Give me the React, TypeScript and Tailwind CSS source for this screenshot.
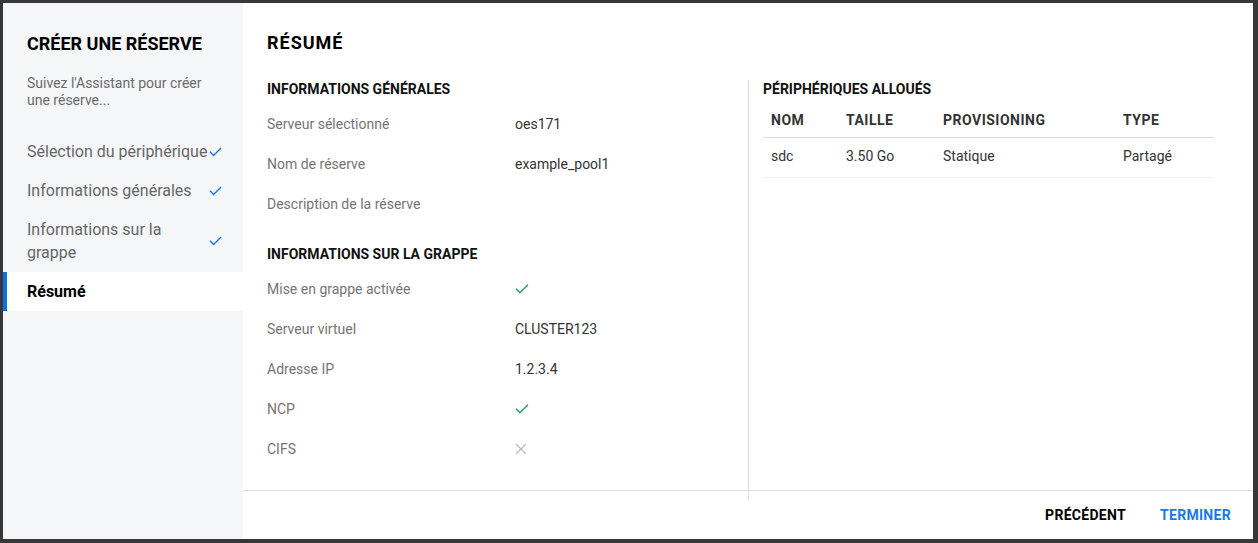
import React from "react";

type Step = { label: string; done: boolean; active?: boolean };

const steps: Step[] = [
  { label: "Sélection du périphérique", done: true },
  { label: "Informations générales", done: true },
  { label: "Informations sur la grappe", done: true },
  { label: "Résumé", done: false, active: true },
];

const general: { label: string; value: string }[] = [
  { label: "Serveur sélectionné", value: "oes171" },
  { label: "Nom de réserve", value: "example_pool1" },
  { label: "Description de la réserve", value: "" },
];

type ClusterValue = string | "yes" | "no";

const cluster: { label: string; value: ClusterValue }[] = [
  { label: "Mise en grappe activée", value: "yes" },
  { label: "Serveur virtuel", value: "CLUSTER123" },
  { label: "Adresse IP", value: "1.2.3.4" },
  { label: "NCP", value: "yes" },
  { label: "CIFS", value: "no" },
];

function Check({ className }: { className: string }) {
  return (
    <svg viewBox="0 0 14 10" className={className} fill="none">
      <path d="M1 4.8l4 4 8-8" stroke="currentColor" strokeWidth="1.5" />
    </svg>
  );
}

function Cross() {
  return (
    <svg viewBox="0 0 12 12" className="h-[12px] w-[12px] text-[#bdbdbd]" fill="none">
      <path d="M1 1l10 10M11 1L1 11" stroke="currentColor" strokeWidth="1.3" />
    </svg>
  );
}

function SectionTitle({ children }: { children: React.ReactNode }) {
  return <h3 className="mb-[5px] text-[14px] font-bold leading-5 text-[#111]">{children}</h3>;
}

function Row({ label, children }: { label: string; children: React.ReactNode }) {
  return (
    <div className="flex h-10 items-center text-[14px] leading-5">
      <span className="w-[248px] shrink-0 text-[#747474]">{label}</span>
      <span className="text-[#333]">{children}</span>
    </div>
  );
}

export default function App() {
  return (
    <div className="h-[543px] w-[1258px] overflow-hidden bg-[#373737] pl-[3px] pt-[3px] font-['Roboto',sans-serif]">
      <div className="flex h-[536px] w-[1250px] bg-white">
        {/* Sidebar */}
        <aside className="w-[240px] shrink-0 bg-[#f5f6f8] pt-[29px]">
          <div className="pl-6 pr-[21px]">
            <h1 className="text-[18px] font-bold leading-6 text-black">CRÉER UNE RÉSERVE</h1>
            <p className="mt-[19px] text-[14px] leading-[17px] text-[#6b6b6b]">
              Suivez l'Assistant pour créer une réserve...
            </p>
          </div>
          <ul className="mt-[23px]">
            {steps.map((s) => (
              <li
                key={s.label}
                className={`relative flex items-center py-2 pl-6 pr-[21px] text-[16px] leading-[23px] ${
                  s.active ? "bg-white font-bold text-black" : "text-[#666]"
                }`}
              >
                {s.active && <span className="absolute bottom-0 left-0 top-0 w-[4px] bg-[#0a70e4]" />}
                <span className="min-w-0 flex-1">{s.label}</span>
                {s.done && <Check className="h-[10px] w-[13px] shrink-0 text-[#1a7ae8]" />}
              </li>
            ))}
          </ul>
        </aside>

        {/* Main */}
        <main className="flex min-w-0 flex-1 flex-col">
          <h2 className="px-6 pt-[28px] text-[18px] font-bold leading-6 tracking-[1px] text-black">RÉSUMÉ</h2>

          <div className="mt-[24px] grid flex-1 grid-cols-2 px-6">
            <section className="pr-4">
              <SectionTitle>INFORMATIONS GÉNÉRALES</SectionTitle>
              {general.map((r) => (
                <Row key={r.label} label={r.label}>
                  {r.value}
                </Row>
              ))}
              <div className="mt-[20px]">
                <SectionTitle>INFORMATIONS SUR LA GRAPPE</SectionTitle>
                {cluster.map((r) => (
                  <Row key={r.label} label={r.label}>
                    {r.value === "yes" ? (
                      <Check className="h-[10px] w-[14px] text-[#2a9d5c]" />
                    ) : r.value === "no" ? (
                      <Cross />
                    ) : (
                      r.value
                    )}
                  </Row>
                ))}
              </div>
            </section>

            <section className="mt-[1px] border-l border-[#dedede] pl-[14px] pr-[15px]">
              <div className="-mt-[1px]">
                <SectionTitle>PÉRIPHÉRIQUES ALLOUÉS</SectionTitle>
              </div>
              <table className="mt-[11px] w-full border-collapse text-left text-[14px] leading-5 text-[#333]">
                <thead>
                  <tr className="border-b border-[#dcdcdc]">
                    <th className="w-[75px] px-2 pb-[7px] font-bold tracking-[0.5px]">NOM</th>
                    <th className="w-[97px] px-2 pb-[7px] font-bold tracking-[0.5px]">TAILLE</th>
                    <th className="w-[180px] px-2 pb-[7px] font-bold tracking-[0.5px]">PROVISIONING</th>
                    <th className="px-2 pb-[7px] font-bold tracking-[0.5px]">TYPE</th>
                  </tr>
                </thead>
                <tbody>
                  <tr className="border-b border-[#efefef]">
                    <td className="px-2 pb-[11px] pt-[8px]">sdc</td>
                    <td className="px-2 pb-[11px] pt-[8px]">3.50 Go</td>
                    <td className="px-2 pb-[11px] pt-[8px]">Statique</td>
                    <td className="px-2 pb-[11px] pt-[8px]">Partagé</td>
                  </tr>
                </tbody>
              </table>
            </section>
          </div>

          <footer className="-mt-[10px] flex h-[49px] shrink-0 items-center justify-end gap-[34px] border-t border-[#dedede] pr-[22px] text-[14px] font-bold tracking-[0.3px]">
            <button className="text-black">PRÉCÉDENT</button>
            <button className="text-[#1a7ae8]">TERMINER</button>
          </footer>
        </main>
      </div>
    </div>
  );
}
